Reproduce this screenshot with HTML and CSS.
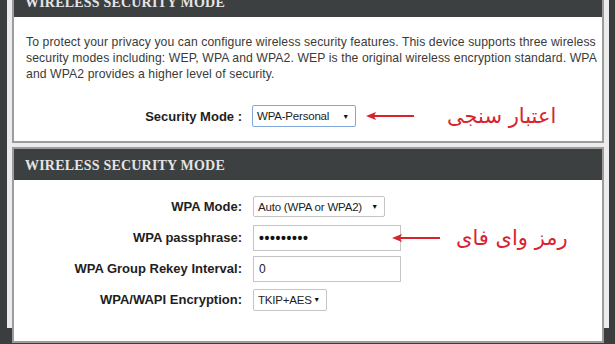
FILE: index.html
```html
<!DOCTYPE html>
<html lang="en">
<head>
  <meta charset="UTF-8" />
  <title>Wireless Security</title>
  <link rel="stylesheet" href="styles.css">
</head>
<body>
  <div class="page">
    <section class="box box-first">
      <h2 class="box-title">Wireless Security Mode</h2>
      <div class="box-body">
        <p class="intro">To protect your privacy you can configure wireless security features. This device supports three wireless security modes including: WEP, WPA and WPA2. WEP is the original wireless encryption standard. WPA and WPA2 provides a higher level of security.</p>
        <div class="form-row mode-row">
          <label>Security Mode :</label>
          <div class="field">
            <div class="select select-focus select-mode">WPA-Personal <span class="caret">&#9660;</span></div>
            <svg class="pointer" width="48" height="10" viewBox="0 0 48 10">
              <line x1="6" y1="5" x2="48" y2="5" stroke="#d9232c" stroke-width="2"/>
              <path d="M0,5 L10,1 L8,5 L10,9 Z" fill="#d9232c"/>
            </svg>
            <span class="note" dir="rtl">اعتبار سنجی</span>
          </div>
        </div>
      </div>
    </section>

    <section class="box">
      <h2 class="box-title">Wireless Security Mode</h2>
      <div class="box-body form">
        <div class="form-row">
          <label>WPA Mode:</label>
          <div class="field">
            <div class="select select-wpa">Auto (WPA or WPA2) <span class="caret">&#9660;</span></div>
          </div>
        </div>
        <div class="form-row">
          <label>WPA passphrase:</label>
          <div class="field">
            <div class="input pass">&#8226;&#8226;&#8226;&#8226;&#8226;&#8226;&#8226;&#8226;&#8226;</div>
            <svg class="pointer pointer-over" width="48" height="10" viewBox="0 0 48 10">
              <line x1="6" y1="5" x2="48" y2="5" stroke="#d9232c" stroke-width="2"/>
              <path d="M0,5 L10,1 L8,5 L10,9 Z" fill="#d9232c"/>
            </svg>
            <span class="note note-pass" dir="rtl">رمز وای فای</span>
          </div>
        </div>
        <div class="form-row">
          <label>WPA Group Rekey Interval:</label>
          <div class="field">
            <div class="input">0</div>
          </div>
        </div>
        <div class="form-row">
          <label>WPA/WAPI Encryption:</label>
          <div class="field">
            <div class="select select-enc">TKIP+AES <span class="caret">&#9660;</span></div>
          </div>
        </div>
      </div>
    </section>
  </div>
</body>
</html>
```

FILE: styles.css
```css
body {
  margin: 0;
  background-color: #3a3e3f;
  font-family: 'Liberation Sans', Arial, sans-serif;
  color: #333;
  height: 344px;
  overflow: hidden;
}

.page {
  margin: 0 6px 0 7px;
  padding: 0 5px;
  background-color: #ececec;
  height: 100%;
}

.box {
  border: 2px solid #9c9c9c;
  background: #fff;
  margin-bottom: 4px;
}

.box-first {
  margin-top: -16px;
}

.box-title {
  margin: 0;
  height: 31px;
  line-height: 33px;
  padding-left: 11px;
  background-color: #3c4041;
  color: #e4e4e4;
  font-family: 'Liberation Serif', Georgia, serif;
  font-weight: bold;
  font-size: 14px;
  text-transform: uppercase;
  letter-spacing: 0.2px;
}

.box-body {
  padding: 17px 2px 15px 12px;
}

.intro {
  margin: 0 0 22px;
  font-size: 12.2px;
  line-height: 16px;
  letter-spacing: 0.1px;
  color: #3a3a3a;
}

.form {
  padding: 11px 10px 26px 0;
}

.form-row {
  display: grid;
  grid-template-columns: 228px 1fr;
  column-gap: 11px;
  align-items: center;
  height: 31px;
}

.mode-row {
  margin-left: -12px;
  height: 22px;
}

.form-row label {
  text-align: right;
  font-weight: bold;
  font-size: 13px;
  color: #1e1e1e;
}

.field {
  display: flex;
  align-items: center;
}

.select {
  display: flex;
  align-items: center;
  justify-content: space-between;
  box-sizing: border-box;
  height: 22px;
  padding: 0 6px 0 4px;
  border: 1px solid #c4c4c4;
  border-radius: 2px;
  font-size: 11.5px;
  letter-spacing: -0.2px;
  color: #222;
  background: #fff;
}

.select-focus {
  border-color: #7fa7d9;
  margin-left: -1px;
}

.select-mode { width: 104px; }
.select-wpa { width: 132px; height: 21px; }
.select-enc { width: 74px; }

.caret {
  font-size: 7px;
  color: #111;
}

.input {
  box-sizing: border-box;
  width: 148px;
  height: 26px;
  line-height: 24px;
  padding: 0 5px;
  border: 1px solid #c4c4c4;
  font-size: 12px;
  color: #222;
}

.pass {
  font-size: 14px;
  font-weight: bold;
  letter-spacing: 0.6px;
  color: #111;
}

.pointer {
  margin-left: 10px;
}

.pointer-over {
  margin-left: -9px;
  position: relative;
}

.note {
  margin-left: 33px;
  font-family: 'DejaVu Sans', sans-serif;
  font-size: 21px;
  color: #d9232c;
}

.note-pass {
  margin-left: 16px;
}
```
